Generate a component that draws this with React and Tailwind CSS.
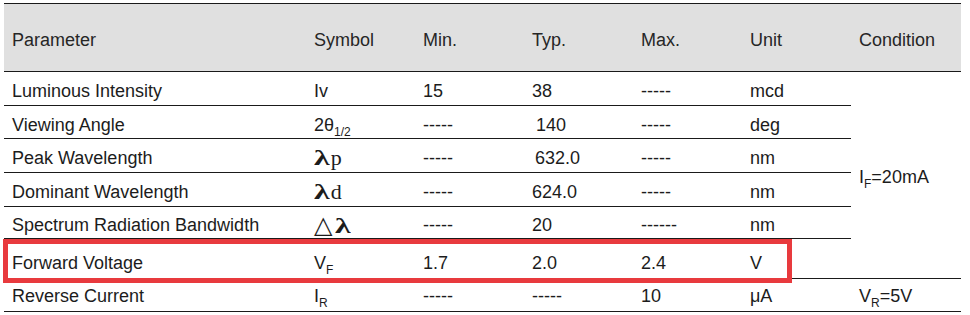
import React from 'react'

const line = 'border-b border-[#1a1a1a]'

function Cell({ children, className = '', pt = 'pt-[5px]' }) {
  return (
    <div className={`flex items-center pl-2 ${pt} ${line} ${className}`}>{children}</div>
  )
}

function Sub({ children }) {
  return <span className="text-[12px] relative top-[5px]">{children}</span>
}

function Lambda({ children }) {
  return (
    <span className="font-['Liberation_Serif',serif] text-[22px] leading-none">{children}</span>
  )
}

// the datasheet's lambda is wider than the font's, so stretch it a bit
const L = () => (
  <span className="inline-block font-bold scale-x-[1.45] origin-left mr-[6px]">λ</span>
)

const rows = [
  { name: 'Luminous Intensity', sym: 'Iv', min: '15', typ: '38', max: '-----', unit: 'mcd' },
  { name: 'Viewing Angle', sym: <span>2θ<Sub>1/2</Sub></span>, min: '-----', typ: <span className="pl-[4px]">140</span>, max: '-----', unit: 'deg' },
  { name: 'Peak Wavelength', sym: <Lambda><L />p</Lambda>, min: '-----', typ: <span className="pl-[3px]">632.0</span>, max: '-----', unit: 'nm' },
  { name: 'Dominant Wavelength', sym: <Lambda><L />d</Lambda>, min: '-----', typ: '624.0', max: '-----', unit: 'nm' },
  { name: 'Spectrum Radiation Bandwidth', sym: <Lambda><span className="text-[24px] pr-[3px]">△</span><L /></Lambda>, min: '-----', typ: '20', max: '------', unit: 'nm' },
  { name: 'Forward Voltage', sym: <span>V<Sub>F</Sub></span>, min: '1.7', typ: '2.0', max: '2.4', unit: 'V', pt: 'pt-[8px]' },
]

export default function App() {
  return (
    <div className="relative w-[970px] h-[315px] bg-white text-[#1c1c1c] font-['Liberation_Sans',Arial,sans-serif] text-[18px] leading-none">
      <div className="ml-[4px] mt-[3px] w-[957px] border-t border-[#1a1a1a] grid grid-cols-[302px_repeat(5,109px)_110px] grid-rows-[68px_34px_33px_34px_34px_32px_40px_33px]">
        {['Parameter', 'Symbol', 'Min.', 'Typ.', 'Max.', 'Unit', 'Condition'].map((h) => (
          <Cell key={h} className="bg-[#e0e0e0] text-[#262626]" pt="pt-[4px]">{h}</Cell>
        ))}

        {rows.map((r, i) => (
          <React.Fragment key={r.name}>
            <Cell pt={r.pt}>{r.name}</Cell>
            <Cell pt={r.pt}>{r.sym}</Cell>
            <Cell pt={r.pt}>{r.min}</Cell>
            <Cell pt={r.pt}>{r.typ}</Cell>
            <Cell pt={r.pt}>{r.max}</Cell>
            <Cell pt={r.pt}>{r.unit}</Cell>
            {i === 0 && (
              <Cell className="row-span-6" pt="pt-[4px]">
                <span>I<Sub>F</Sub>=20mA</span>
              </Cell>
            )}
          </React.Fragment>
        ))}

        <Cell pt="pt-[2px]">Reverse Current</Cell>
        <Cell pt="pt-[2px]"><span>I<Sub>R</Sub></span></Cell>
        <Cell pt="pt-[2px]">-----</Cell>
        <Cell pt="pt-[2px]">-----</Cell>
        <Cell pt="pt-[2px]">10</Cell>
        <Cell pt="pt-[2px]">μA</Cell>
        <Cell pt="pt-[2px]"><span>V<Sub>R</Sub>=5V</span></Cell>
      </div>

      {/* highlight box around the forward voltage row */}
      <div className="absolute left-[3px] top-[236px] w-[789px] h-[44px] border-[5px] border-[#e83a3e]"></div>
    </div>
  )
}
